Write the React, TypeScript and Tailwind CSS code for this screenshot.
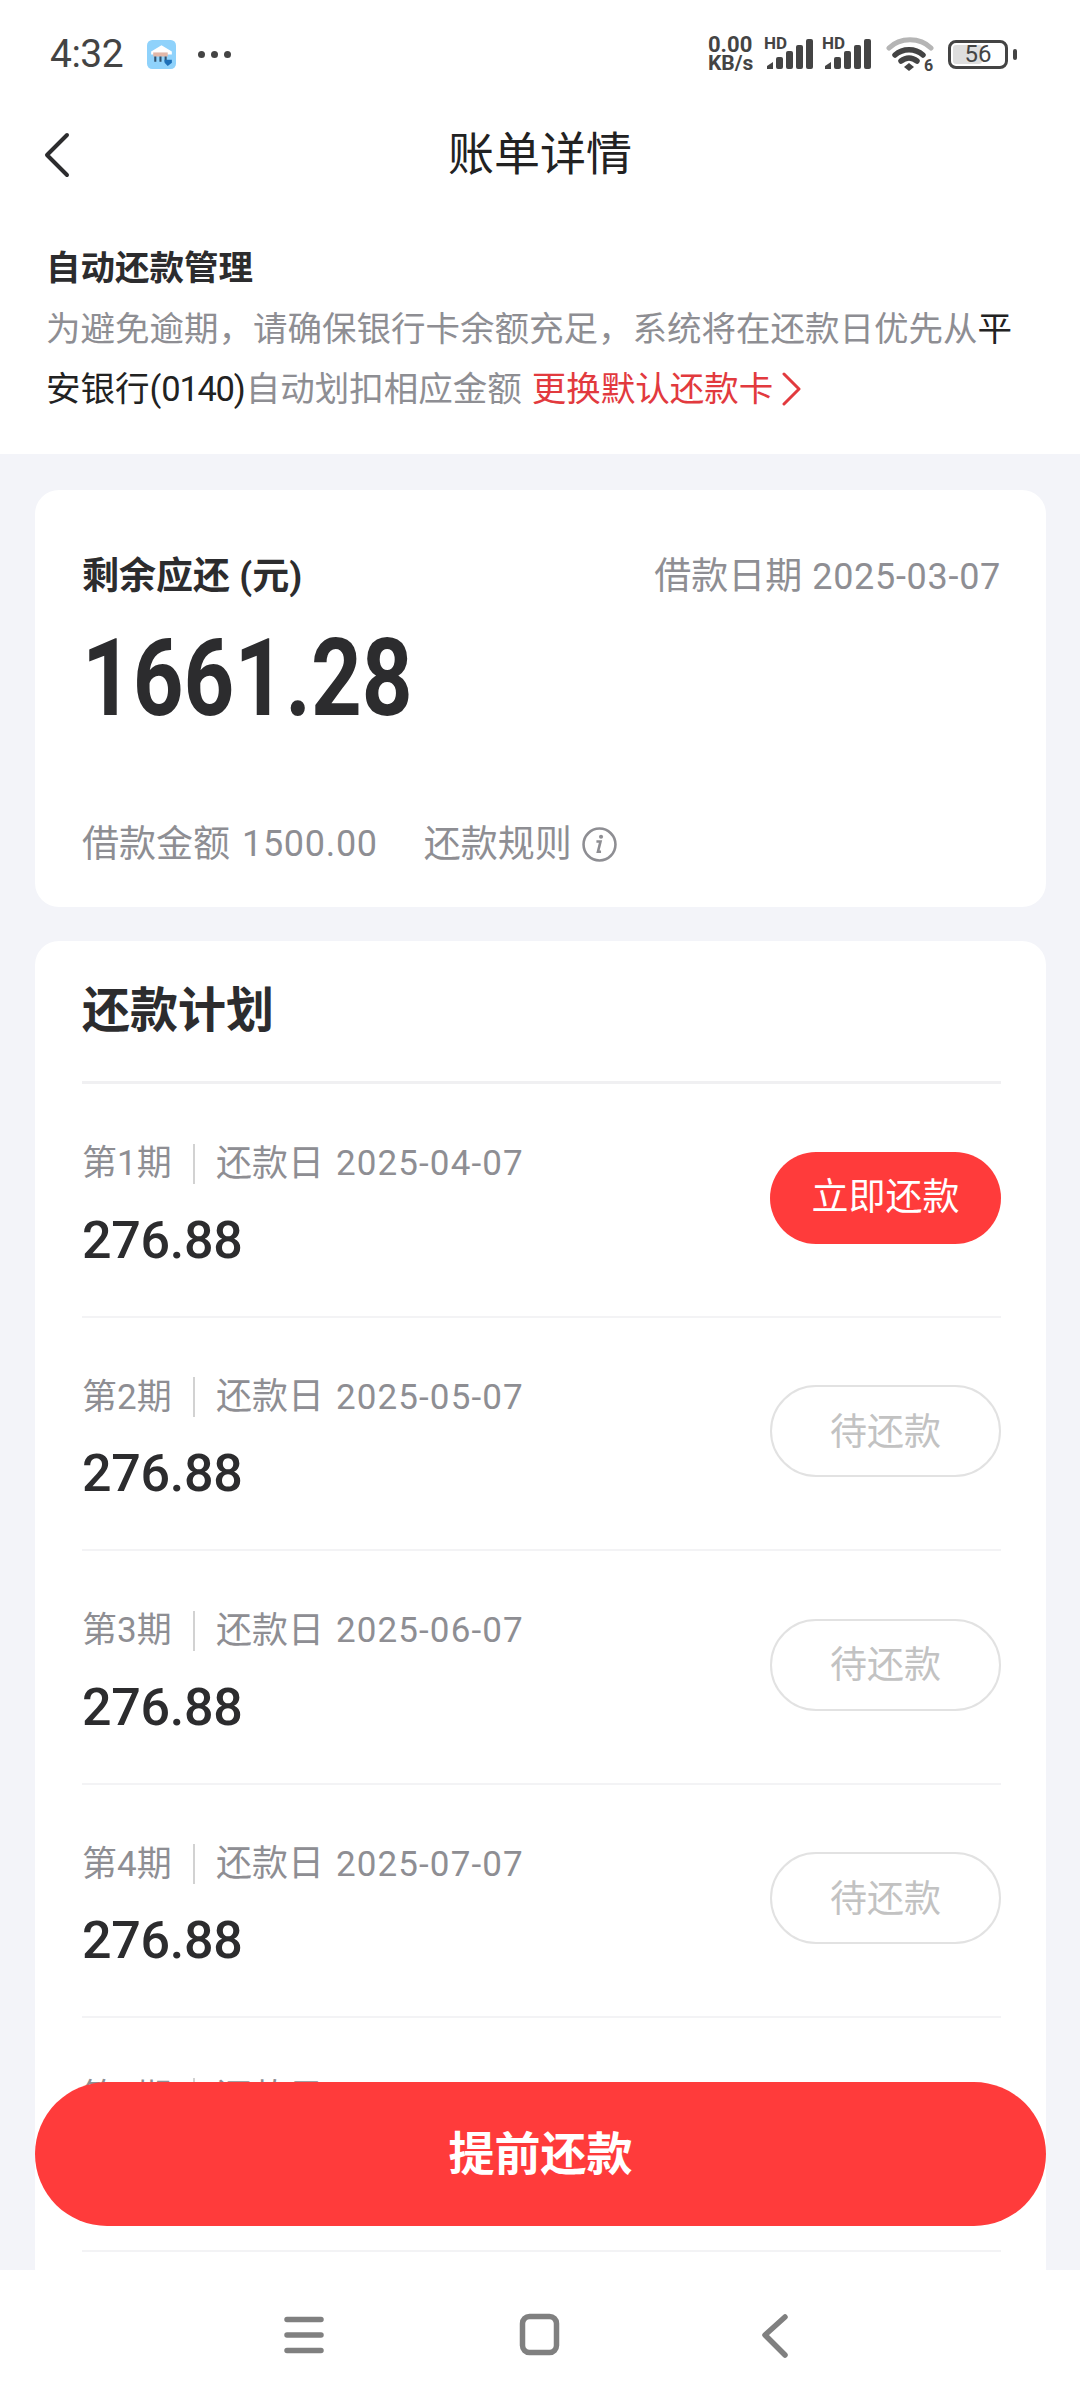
const plans = [
  { no: 1, date: "2025-04-07", active: true },
  { no: 2, date: "2025-05-07" },
  { no: 3, date: "2025-06-07" },
  { no: 4, date: "2025-07-07" },
  { no: 5, date: "2025-08-07" },
  { no: 6, date: "2025-09-07" },
];

function Signal() {
  return (
    <div className="relative h-[34px] w-[50px]">
      <span className="absolute -left-[1px] -top-[1px] text-[17px] leading-[15px] font-bold text-[#444]">HD</span>
      <svg viewBox="0 0 50 34" className="absolute inset-0 h-full w-full" fill="#444">
        <path d="M2 32v-3l6-4v7z" />
        <rect x="11" y="20" width="7" height="12" rx="2" />
        <rect x="21" y="14" width="7" height="18" rx="2" />
        <rect x="31" y="8" width="7" height="24" rx="2" />
        <rect x="41" y="2" width="7" height="30" rx="2" />
      </svg>
    </div>
  );
}

function StatusBar() {
  return (
    <div className="flex h-[108px] items-center pl-[50px] pr-[63px] text-[#444]">
      <span className="text-[39px] leading-none tracking-[-0.5px]">4:32</span>
      <svg viewBox="0 0 28 28" className="ml-[24px] h-[29px] w-[29px]">
        <rect width="28" height="28" rx="5" fill="#8fd2fb" />
        <path d="M4 11 14 5l10 6v3H4z" fill="#fff" />
        <path d="M6 12h14v4H6z" fill="#e2b7a8" />
        <path d="M7 16h2v5H7zM12 16h2v5h-2zM17 16h2v5h-2z" fill="#33526e" />
        <path d="M17 19h7v3l-4 3-3-3z" fill="#1d6fb8" />
      </svg>
      <div className="ml-[22px] flex gap-[6px]">
        <span className="h-[7px] w-[7px] rounded-full bg-[#444]" />
        <span className="h-[7px] w-[7px] rounded-full bg-[#444]" />
        <span className="h-[7px] w-[7px] rounded-full bg-[#444]" />
      </div>
      <div className="ml-auto flex items-center">
        <div className="flex w-[50px] flex-col text-[22px] leading-[18px] font-bold">
          <span>0.00</span>
          <span className="text-[21px]">KB/s</span>
        </div>
        <div className="ml-[7px]">
          <Signal />
        </div>
        <div className="ml-[8px]">
          <Signal />
        </div>
        <svg viewBox="0 0 48 36" className="ml-[13px] h-[36px] w-[48px]">
          <path d="M3 12C14 1 34 1 45 12" fill="none" stroke="#b5b5b5" strokeWidth="5" strokeLinecap="round" />
          <path d="M9 19c8-7 20-7 28 0" fill="none" stroke="#444" strokeWidth="5.5" strokeLinecap="round" />
          <path d="M15 25c5-4 11-4 16 0" fill="none" stroke="#444" strokeWidth="5.5" strokeLinecap="round" />
          <path d="m23 27 5 4-5 4-5-4z" fill="#444" />
          <text x="38" y="35" fontSize="16" fontWeight="700" fill="#444">6</text>
        </svg>
        <div className="relative ml-[14px] flex h-[29px] w-[60px] items-center justify-center overflow-hidden rounded-[8px] border-[3px] border-[#444]">
          <span className="absolute bottom-[2px] left-[2px] top-[2px] w-[29px] rounded-[3px] bg-[#dedede]" />
          <span className="relative text-[24px] leading-none">56</span>
        </div>
        <span className="ml-[5px] h-[11px] w-[4px] rounded-full bg-[#444]" />
      </div>
    </div>
  );
}

function PlanRow({ no, date, active }: { no: number; date: string; active?: boolean }) {
  return (
    <div className="flex h-[233.5px] items-center justify-between border-b-2 border-[#f3f3f5]">
      <div className="mt-[5px]">
        <div className="flex h-[40px] items-center text-[35px] leading-none text-[#8e8e93]">
          <span className="w-[92px]">第{no}期</span>
          <span className="ml-[19px] h-[40px] w-[2px] bg-[#d2d2d2]" />
          <span className="ml-[21px] text-[36px]">还款日</span>
          <span className="ml-[12px] tracking-[1.1px]">{date}</span>
        </div>
        <div className="mt-[37px] flex h-[40px] items-center text-[52px] leading-none font-medium tracking-[-0.3px] text-[#2c2c2e]">276.88</div>
      </div>
      {active ? (
        <div className="mb-[4px] flex h-[92px] w-[231px] items-center justify-center rounded-full bg-[#ff3b3b] text-[37px] leading-none text-white">立即还款</div>
      ) : (
        <div className="mb-[4px] flex h-[92px] w-[231px] items-center justify-center rounded-full border-2 border-[#e2e2e2] pt-[2px] text-[37px] leading-none text-[#c2c2c2]">待还款</div>
      )}
    </div>
  );
}

export default function App() {
  return (
    <div className="relative flex h-[2400px] w-[1080px] flex-col overflow-hidden bg-white font-['Roboto','Noto_Sans_CJK_SC',sans-serif]">
      <div className="min-h-0 flex-1 overflow-hidden bg-[#f3f4f9]">
        <div className="bg-white">
          <StatusBar />
          <div className="relative flex h-[92px] items-center justify-center text-[46px] leading-none text-[#222]">
            <svg viewBox="0 0 26 46" className="absolute left-[44px] top-[24px] h-[46px] w-[26px]" fill="none" stroke="#2c2c2e" strokeWidth="4" strokeLinecap="round" strokeLinejoin="round">
              <path d="M23 3 3 23l20 20" />
            </svg>
            账单详情
          </div>
          <div className="px-[46px] pb-[35px] pt-[48px]">
            <div className="flex h-[40px] items-center text-[34.5px] leading-none font-bold text-[#2c2c2e]">自动还款管理</div>
            <p className="mt-[11px] text-[34.5px] leading-[60px] text-[#8e8e93]">
              为避免逾期，请确保银行卡余额充足，系统将在还款日优先从
              <span className="text-[#222]">
                平安银行(<span className="tracking-[-1.3px]">0140</span>)
              </span>
              自动划扣相应金额
              <span className="ml-[10px] inline-flex items-center text-[#e23a3e]">
                更换默认还款卡
                <svg viewBox="0 0 20 34" className="ml-[8px] h-[34px] w-[20px]" fill="none" stroke="#e23a3e" strokeWidth="3" strokeLinecap="round" strokeLinejoin="round">
                  <path d="m3 2 15 15L3 32" />
                </svg>
              </span>
            </p>
          </div>
        </div>

        <div className="pl-[35px] pr-[34px] pt-[36px]">
          <div className="h-[417px] rounded-[24px] bg-white pl-[47px] pr-[45px] pt-[66px]">
            <div className="flex h-[40px] items-center justify-between">
              <span className="text-[37px] leading-none font-bold text-[#2c2c2e]">剩余应还 (元)</span>
              <span className="text-[37px] leading-none text-[#8e8e93]">
                借款日期<span className="ml-[10px] text-[36px] tracking-[0.7px]">2025-03-07</span>
              </span>
            </div>
            <div className="mt-[27px] h-[110px] origin-left scale-x-[0.82] text-[108px] leading-[110px] font-bold text-[#2c2c2e]">1661.28</div>
            <div className="mt-[91px] flex h-[40px] items-center text-[37px] leading-none text-[#8e8e93]">
              <span>借款金额</span>
              <span className="ml-[12px] text-[36px] tracking-[0.7px]">1500.00</span>
              <span className="ml-[46px]">还款规则</span>
              <svg viewBox="0 0 34 34" className="ml-[10px] h-[35px] w-[35px]" fill="none" stroke="#8e8e93">
                <circle cx="17" cy="17" r="15.5" strokeWidth="2.5" />
                <circle cx="18.5" cy="9.5" r="2" fill="#8e8e93" stroke="none" />
                <path d="M14 14h4l-2.5 10h3" strokeWidth="2.5" />
              </svg>
            </div>
          </div>

          <div className="mt-[34px] rounded-[24px] bg-white pl-[47px] pr-[45px]">
            <div className="flex h-[143px] items-center border-b-[3px] border-[#f0f0f2] text-[48px] leading-none font-bold text-[#2c2c2e]">还款计划</div>
            {plans.map((p) => (
              <PlanRow key={p.no} {...p} />
            ))}
          </div>
        </div>
      </div>

      <div className="flex h-[130px] shrink-0 items-start bg-white">
        <svg viewBox="0 0 1080 130" className="h-[130px] w-[1080px]" fill="none" stroke="#808080" strokeWidth="5.5" strokeLinecap="round" strokeLinejoin="round">
          <path d="M287 49.5h34M287 65h34M287 80.5h34" />
          <rect x="522.5" y="46.5" width="34" height="36" rx="7" />
          <path d="M785 47 765 65l20 20" />
        </svg>
      </div>

      <div className="absolute left-[35px] top-[2082px] flex h-[144px] w-[1011px] items-center justify-center rounded-full bg-[#ff3b3b] text-[46px] leading-none font-bold text-white">提前还款</div>
    </div>
  );
}
